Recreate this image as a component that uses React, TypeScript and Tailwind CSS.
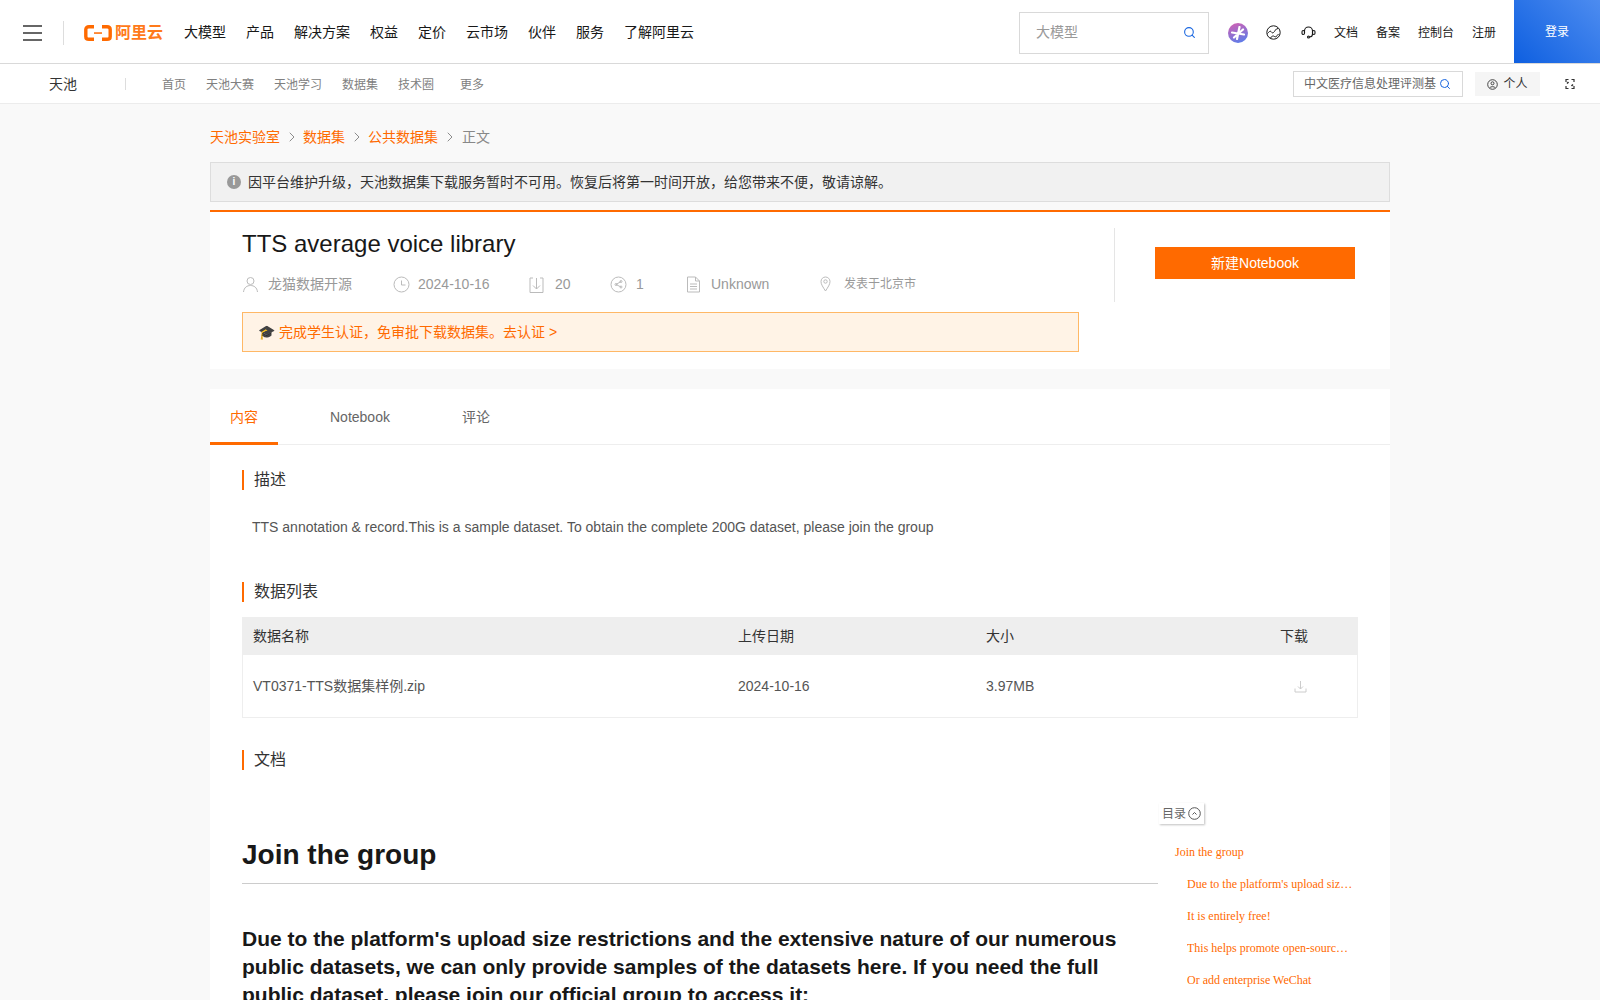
import { Search, ChevronRight } from 'lucide-react'

const FONT = 'font-["Liberation_Sans","Noto_Sans_CJK_SC",sans-serif]'

const NAV_ITEMS = ['大模型', '产品', '解决方案', '权益', '定价', '云市场', '伙伴', '服务', '了解阿里云']
const TOC_ITEMS = [
  "Due to the platform's upload size restrictions",
  'It is entirely free!',
  'This helps promote open-source datasets',
  'Or add enterprise WeChat',
]

function Logo() {
  return (
    <div className="flex items-center gap-[3px]">
      <svg width="28" height="16" viewBox="0 0 28 16" fill="none">
        <path d="M10 1.700H5C3 1.700 1.800 2.900 1.800 4.600v6.800c0 1.700 1.200 2.900 3.200 2.900h5" stroke="#ff6a00" strokeWidth="3.400" />
        <path d="M18 1.700h5c2 0 3.200 1.200 3.200 2.900v6.800c0 1.700-1.200 2.900-3.200 2.900h-5" stroke="#ff6a00" strokeWidth="3.400" />
        <rect x="10" y="7.300" width="8" height="1.500" fill="#ff6a00" />
      </svg>
      <span className="text-[16px] leading-none font-bold text-[#ff7a1a]">阿里云</span>
    </div>
  )
}

function TopBar() {
  return (
    <header className="flex h-[64px] border-b border-[#d9d9d9] bg-white">
      <div className="flex flex-1 items-center pt-[2px]">
        <div className="ml-[23px] flex w-[19px] flex-col gap-[5px]">
          <span className="h-[2px] bg-[#666]" />
          <span className="h-[2px] bg-[#666]" />
          <span className="h-[2px] bg-[#666]" />
        </div>
        <span className="ml-[21px] h-[24px] w-px bg-[#ddd]" />
        <div className="ml-[20px]">
          <Logo />
        </div>
        <nav className="ml-[21px] flex gap-[20px] text-[14px] text-[#181818]">
          {NAV_ITEMS.map((item) => (
            <span key={item}>{item}</span>
          ))}
        </nav>
        <div className="ml-auto flex h-[42px] w-[190px] items-center justify-between border border-[#d9d9d9] pr-[12px] pl-[16px] text-[14px] text-[#999]">
          大模型
          <Search size={13} className="text-[#1966e0]" />
        </div>
        <div className="ml-[19px] h-[20px] w-[20px] rounded-full bg-[linear-gradient(160deg,#d85fb0,#4f80f0)] p-[3px]">
          <svg viewBox="0 0 14 14" fill="none" stroke="white" strokeWidth="2.200" strokeLinecap="round">
            <path d="M8.500 1 6 13M1 6.500l12 2M3 11.500l9-8" />
          </svg>
        </div>
        <svg className="ml-[18px]" width="15" height="15" viewBox="0 0 15 15" fill="none" stroke="#181818" strokeWidth="1">
          <circle cx="7.500" cy="7.500" r="6.700" />
          <path d="M1.500 8.500C3 7 4 5.500 5 6.500s1 2 2.500 1S9.500 3.500 12 3.500M4.500 13c1-2 3-2.500 4-1.500s2 0 4-2.500" />
        </svg>
        <svg className="ml-[20px]" width="15" height="15" viewBox="0 0 15 15" fill="none" stroke="#181818" strokeWidth="1.100">
          <path d="M3.500 8V6a4 4 0 0 1 8 0v3c0 2-1.500 3-3 3" />
          <rect x="1" y="5.500" width="2.500" height="4" rx="1.200" />
          <rect x="11.500" y="5.500" width="2.500" height="4" rx="1.200" />
          <circle cx="7.500" cy="12" r="1" />
        </svg>
        <div className="mr-[18px] ml-[18px] flex gap-[18px] text-[12px] text-[#181818]">
          <span>文档</span>
          <span>备案</span>
          <span>控制台</span>
          <span>注册</span>
        </div>
      </div>
      <div className="flex w-[86px] items-center justify-center bg-[linear-gradient(45deg,#0e5fe0,#4d8cf0)] text-[12px] text-white">
        登录
      </div>
    </header>
  )
}

function SubBar() {
  return (
    <div className="flex h-[40px] items-center border-b border-[#ececec] bg-white">
      <span className="ml-[49px] pt-[2px] text-[14px] text-[#333]">天池</span>
      <span className="ml-[48px] h-[12px] w-px bg-[#ddd]" />
      <div className="ml-[36px] flex pt-[2px] text-[12px] text-[#808080]">
        <span className="w-[44px]">首页</span>
        <span className="w-[68px]">天池大赛</span>
        <span className="w-[68px]">天池学习</span>
        <span className="w-[56px]">数据集</span>
        <span className="w-[62px]">技术圈</span>
        <span>更多</span>
      </div>
      <div className="ml-auto flex h-[26px] w-[170px] items-center justify-between border border-[#d9d9d9] pt-[1px] pr-[11px] pl-[10px] text-[12px] text-[#666]">
        <span className="whitespace-nowrap">中文医疗信息处理评测基</span>
        <Search size={12} className="shrink-0 text-[#1966e0]" />
      </div>
      <div className="ml-[12px] flex h-[24px] w-[65px] items-center justify-center gap-[5px] bg-[#f5f5f5] pt-[1px] text-[12px] text-[#333]">
        <svg width="11" height="11" viewBox="0 0 11 11" fill="none" stroke="#333" strokeWidth="0.900">
          <circle cx="5.500" cy="5.500" r="4.800" />
          <circle cx="5.500" cy="4.300" r="1.500" />
          <path d="M2.800 8.800c.6-1.500 4.800-1.500 5.400 0" />
        </svg>
        个人
      </div>
      <svg className="mx-[24px]" width="12" height="12" viewBox="0 0 12 12" fill="none" stroke="#333" strokeWidth="1.200">
        <path d="M2 4V1.500h2.500M7.500 1.500H10V4M2 8v2.500h2.500M7.500 10.500H10V8" />
        <path d="M3 5.500 4.500 4M9 6.500 7.500 8" strokeWidth="1.600" />
      </svg>
    </div>
  )
}

function MetaIcon({ d }: { d: string }) {
  return (
    <svg width="17" height="17" viewBox="0 0 17 17" fill="none" stroke="#bbb" strokeWidth="1">
      <path d={d} />
    </svg>
  )
}

function Breadcrumb() {
  const crumbs = ['天池实验室', '数据集', '公共数据集']
  return (
    <div className="flex h-[32px] items-center text-[14px]">
      {crumbs.map((crumb) => (
        <span key={crumb} className="flex items-center text-[#ff6a00]">
          {crumb}
          <ChevronRight size={16} strokeWidth={1} className="mr-[3px] ml-[4px] text-[#555]" />
        </span>
      ))}
      <span className="ml-[1px] text-[#888]">正文</span>
    </div>
  )
}

function Summary() {
  return (
    <section className="h-[159px] border-t-2 border-[#ff6a00] bg-white">
      <div className="flex">
        <div className="w-[904px] pl-[32px]">
          <h1 className="mt-[16px] text-[24px] leading-[32px] text-[#181818]">TTS average voice library</h1>
          <div className="mt-[12px] flex h-[24px] items-center text-[14px] text-[#999]">
            <MetaIcon d="M8.500 1.500a3.500 3.500 0 1 1 0 7 3.500 3.500 0 0 1 0-7zM1.500 16c.5-4.500 3.500-6.500 7-6.500s6.500 2 7 6.500" />
            <span className="ml-[9px] w-[125px]">龙猫数据开源</span>
            <MetaIcon d="M8.500 1a7.500 7.500 0 1 1 0 15 7.500 7.500 0 0 1 0-15zM8.500 4.500v4.500h4" />
            <span className="ml-[8px] w-[110px]">2024-10-16</span>
            <MetaIcon d="M5 2H2v14.500h13V2h-3M8.500 2v11M5 9.500l3.500 3.500L12 9.500" />
            <span className="ml-[10px] w-[55px]">20</span>
            <svg width="17" height="17" viewBox="0 0 17 17" fill="none" stroke="#bbb">
              <circle cx="8.500" cy="8.500" r="7.500" />
              <path d="M11 5.500 6 8.500l5 2.500" />
              <circle cx="11" cy="5.500" r="1" />
              <circle cx="6" cy="8.500" r="1" />
              <circle cx="11" cy="11" r="1" />
            </svg>
            <span className="ml-[9px] w-[49px]">1</span>
            <MetaIcon d="M2.500 1h8l4 4v11h-12zM10.500 1v4h4M5 8h7M5 10.500h7M5 13h7" />
            <span className="ml-[9px] w-[53px]">Unknown</span>
            <svg className="ml-[56px]" width="11" height="16" viewBox="0 0 11 16" fill="none" stroke="#bbb">
              <path d="M5.500 15C3 11 1 8.500 1 5.500a4.500 4.500 0 0 1 9 0C10 8.500 8 11 5.500 15z" />
              <circle cx="5.500" cy="5.500" r="1.700" />
            </svg>
            <span className="ml-[13px] text-[12px]">发表于北京市</span>
          </div>
          <div className="mt-[16px] flex h-[40px] w-[837px] items-center border border-[#ffb866] bg-[#fff3e6] pl-[15px] text-[14px] text-[#ff6a00]">
            <span className="text-[#333]">🎓</span>
            <span className="ml-[4px]">完成学生认证，免审批下载数据集。去认证 &gt;</span>
          </div>
        </div>
        <div className="mt-[16px] h-[74px] w-px bg-[#e5e5e5]" />
        <div className="mt-[35px] ml-[40px] flex h-[32px] w-[200px] items-center justify-center bg-[#ff6a00] text-[14px] text-white">
          新建Notebook
        </div>
      </div>
    </section>
  )
}

function SectionTitle({ children }: { children: string }) {
  return (
    <h2 className="border-l-2 border-[#ff6a00] pl-[10px] text-[16px] leading-[20px] text-[#333]">{children}</h2>
  )
}

function DataTable() {
  return (
    <div className="mt-[15px] border border-[#eee] text-[14px] text-[#333]">
      <div className="flex h-[37px] items-center bg-[#eee] pl-[10px]">
        <span className="w-[485px]">数据名称</span>
        <span className="w-[248px]">上传日期</span>
        <span className="w-[294px]">大小</span>
        <span>下载</span>
      </div>
      <div className="flex h-[62px] items-center pl-[10px] text-[#555]">
        <span className="w-[485px]">VT0371-TTS数据集样例.zip</span>
        <span className="w-[248px]">2024-10-16</span>
        <span className="w-[308px]">3.97MB</span>
        <svg width="13" height="13" viewBox="0 0 13 13" fill="none" stroke="#ccc">
          <path d="M6.500 1v8M4 6.500l2.500 2.500L9 6.500M1 8.500v3.500h11V8.500" />
        </svg>
      </div>
    </div>
  )
}

function Toc() {
  return (
    <aside className="ml-[1px] w-[199px] font-['Liberation_Serif','Noto_Sans_CJK_SC',serif] text-[12px] text-[#ff6a00]">
      <div className="mt-[33px] flex h-[21px] w-[45px] items-center gap-[2px] pl-[3px] font-['Liberation_Sans','Noto_Sans_CJK_SC',sans-serif] text-[#666] shadow-[1px_1px_2px_rgba(0,0,0,0.25)]">
        目录
        <svg width="13" height="13" viewBox="0 0 13 13" fill="none" stroke="#555">
          <circle cx="6.500" cy="6.500" r="5.800" />
          <path d="M4.500 7.500l2-2 2 2" />
        </svg>
      </div>
      <div className="mt-[12px] flex h-[32px] items-center pl-[16px]">Join the group</div>
      {TOC_ITEMS.map((item) => (
        <div key={item} className="flex h-[32px] items-center pl-[28px]">
          <span className="w-[166px] truncate">{item}</span>
        </div>
      ))}
    </aside>
  )
}

function Content() {
  return (
    <section className="mt-[20px] bg-white">
      <div className="flex h-[56px] border-b border-[#eee] text-[14px] text-[#666]">
        <div className="flex h-[56px] w-[68px] items-center justify-center border-b-[3px] border-[#ff6a00] pt-[4px] text-[#ff6a00]">
          内容
        </div>
        <div className="ml-[52px] flex items-center pt-[2px]">Notebook</div>
        <div className="ml-[72px] flex items-center pt-[2px]">评论</div>
      </div>
      <div className="px-[32px] pt-[25px]">
        <SectionTitle>描述</SectionTitle>
        <p className="mt-[27px] pl-[10px] text-[14px] leading-[20px] text-[#555]">
          TTS annotation &amp; record.This is a sample dataset. To obtain the complete 200G dataset, please join the group
        </p>
        <div className="mt-[45px]">
          <SectionTitle>数据列表</SectionTitle>
        </div>
        <DataTable />
        <div className="mt-[32px]">
          <SectionTitle>文档</SectionTitle>
        </div>
        <div className="flex">
          <article className="w-[916px] shrink-0 text-[#181818]">
            <h1 className="mt-[64px] border-b border-[#ccc] pb-[7px] text-[28px] leading-[42px] font-bold">Join the group</h1>
            <h2 className="mt-[41px] text-[21px] leading-[28px] font-bold">
              Due to the platform's upload size restrictions and the extensive nature of our numerous public datasets, we can only provide samples of the datasets here. If you need the full public dataset, please join our official group to access it:
            </h2>
          </article>
          <Toc />
        </div>
      </div>
    </section>
  )
}

export default function App() {
  return (
    <div className={`h-[1000px] overflow-hidden bg-[#f9f9f9] ${FONT}`}>
      <TopBar />
      <SubBar />
      <main className="mx-auto w-[1180px] pt-[17px]">
        <Breadcrumb />
        <div className="mt-[9px] flex h-[40px] items-center gap-[7px] border border-[#ddd] bg-[#f1f1f1] pl-[16px] text-[14px] text-[#333]">
          <span className="flex h-[14px] w-[14px] items-center justify-center rounded-full bg-[#999] text-[10px] leading-none font-bold text-white">i</span>
          因平台维护升级，天池数据集下载服务暂时不可用。恢复后将第一时间开放，给您带来不便，敬请谅解。
        </div>
        <div className="mt-[8px]">
          <Summary />
        </div>
        <Content />
      </main>
    </div>
  )
}
